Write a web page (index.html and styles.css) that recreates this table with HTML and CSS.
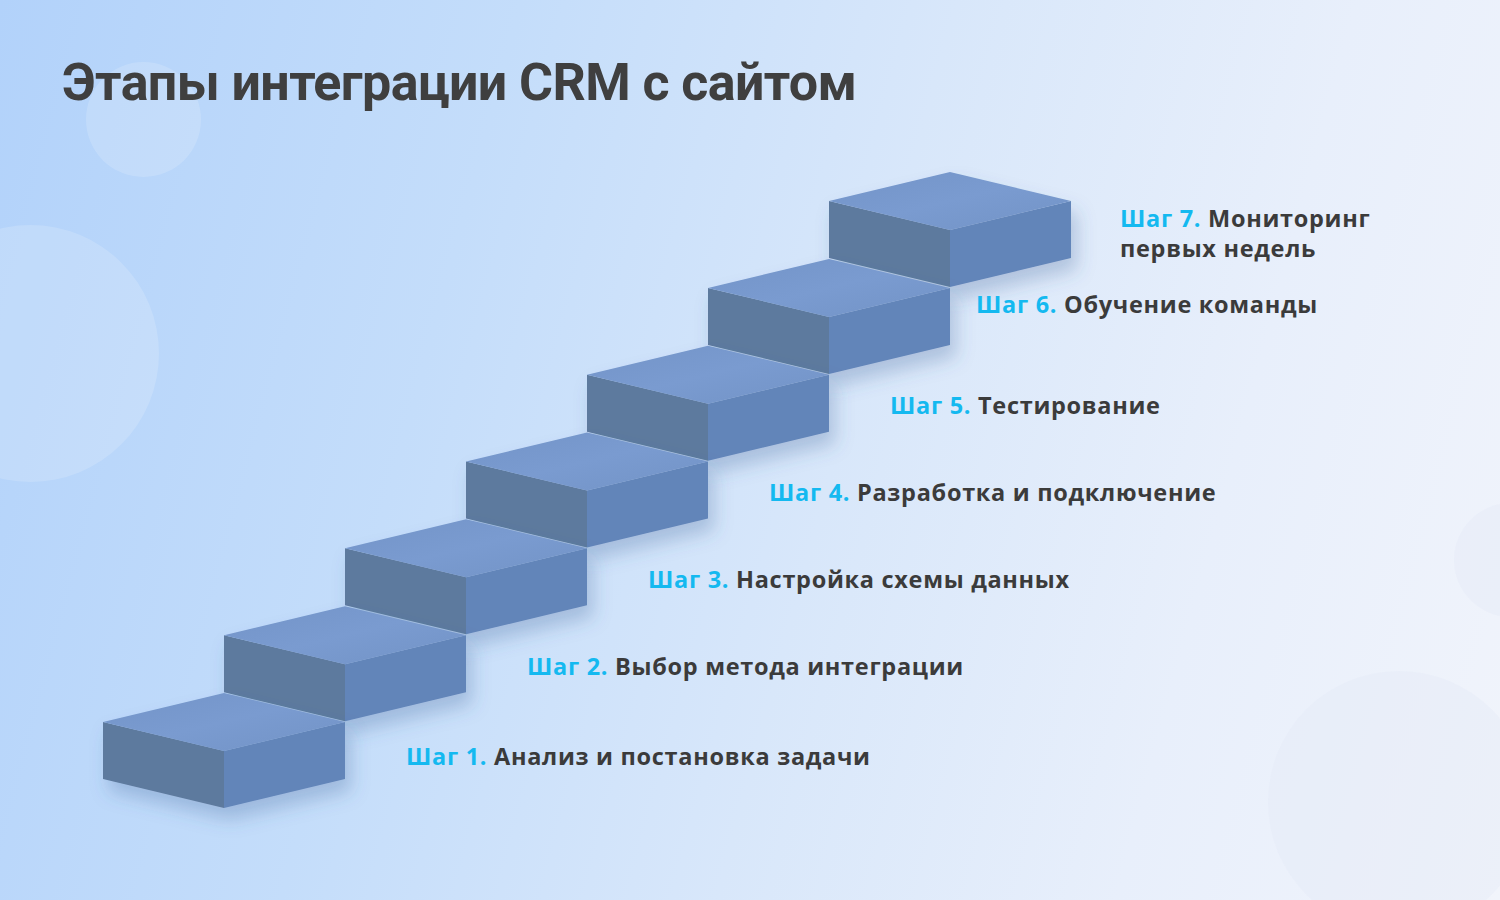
FILE: index.html
```html
<!DOCTYPE html>
<html lang="ru">
<head>
<meta charset="utf-8">
<title>Этапы интеграции CRM с сайтом</title>
<link rel="stylesheet" href="styles.css">
</head>
<body>
<div class="slide">
  <div class="bubble bubble-a"></div>
  <div class="bubble bubble-b"></div>
  <div class="bubble bubble-c"></div>
  <div class="bubble bubble-d"></div>

  <h1 class="title">Этапы интеграции CRM с сайтом</h1>

  <svg class="stairs" width="1500" height="900" viewBox="0 0 1500 900" xmlns="http://www.w3.org/2000/svg">
    <defs>
      <linearGradient id="topg" x1="0" y1="0" x2="1" y2="1">
        <stop offset="0" stop-color="#7394c8"/>
        <stop offset="0.5" stop-color="#7a9bd0"/>
        <stop offset="1" stop-color="#7293c6"/>
      </linearGradient>
      <filter id="sh" x="-20%" y="-20%" width="150%" height="160%">
        <feDropShadow dx="6" dy="12" stdDeviation="9" flood-color="#3a5f94" flood-opacity="0.28"/>
      </filter>
    </defs>
    <g id="blocks"></g>
  </svg>

  <div class="step s1"><span class="num">Шаг 1.</span> Анализ и постановка задачи</div>
  <div class="step s2"><span class="num">Шаг 2.</span> Выбор метода интеграции</div>
  <div class="step s3"><span class="num">Шаг 3.</span> Настройка схемы данных</div>
  <div class="step s4"><span class="num">Шаг 4.</span> Разработка и подключение</div>
  <div class="step s5"><span class="num">Шаг 5.</span> Тестирование</div>
  <div class="step s6"><span class="num">Шаг 6.</span> Обучение команды</div>
  <div class="step s7"><span class="num">Шаг 7.</span> Мониторинг<br>первых недель</div>
</div>
<script src="script.js"></script>
</body>
</html>
```

FILE: script.js
```js
(function () {
  var g = document.getElementById('blocks');
  var ns = 'http://www.w3.org/2000/svg';
  function poly(pts, fill) {
    var p = document.createElementNS(ns, 'polygon');
    p.setAttribute('points', pts.map(function (q) { return q[0].toFixed(1) + ',' + q[1].toFixed(1); }).join(' '));
    p.setAttribute('fill', fill);
    return p;
  }
  for (var i = 6; i >= 0; i--) {
    var x = 103 + 121 * i;
    var y = 722 - 86.83 * i;
    var grp = document.createElementNS(ns, 'g');
    grp.setAttribute('filter', 'url(#sh)');
    grp.appendChild(poly([[x, y], [x + 121, y + 29], [x + 121, y + 86], [x, y + 57]], '#5d7a9e'));
    grp.appendChild(poly([[x + 121, y + 29], [x + 242, y], [x + 242, y + 57], [x + 121, y + 86]], '#6285b9'));
    grp.appendChild(poly([[x, y], [x + 121, y - 29], [x + 242, y], [x + 121, y + 29]], 'url(#topg)'));
    g.appendChild(grp);
  }
})();
```

FILE: styles.css
```css
* { box-sizing: border-box; }
html, body { margin: 0; padding: 0; }
body {
  width: 1500px;
  height: 900px;
  overflow: hidden;
  font-family: "Open Sans", "Roboto", sans-serif;
}
.slide {
  position: relative;
  width: 1500px;
  height: 900px;
  overflow: hidden;
  background: linear-gradient(105deg, #b2d2fa 0%, #c4ddfa 30%, #d8e7fa 55%, #e8effb 78%, #f1f4fb 100%);
  padding: 57px 0 0 62px;
}
.bubble {
  position: absolute;
  border-radius: 50%;
  background: rgba(255, 255, 255, 0.16);
}
.bubble-a { left: 86px; top: 62px; width: 115px; height: 115px; }
.bubble-b { left: -98px; top: 225px; width: 257px; height: 257px; }
.bubble-c { left: 1268px; top: 671px; width: 262px; height: 262px; background: rgba(225, 232, 245, 0.35); }
.bubble-d { left: 1454px; top: 503px; width: 114px; height: 114px; background: rgba(225, 232, 245, 0.35); }

.title {
  position: relative;
  margin: 0;
  font-family: "Roboto", "Liberation Sans", sans-serif;
  font-weight: 700;
  font-size: 52px;
  line-height: 52px;
  letter-spacing: -0.6px;
  color: #3f3f3f;
}
.stairs {
  position: absolute;
  left: 0;
  top: 0;
}
.step {
  position: absolute;
  font-family: "Open Sans", "Roboto", sans-serif;
  font-weight: 700;
  font-size: 23.5px;
  line-height: 30px;
  letter-spacing: 0.7px;
  color: #3b3b3b;
  white-space: nowrap;
}
.num { color: #14b9f0; }
.s1 { left: 406px; top: 741px; }
.s2 { left: 527px; top: 651px; }
.s3 { left: 648px; top: 564px; }
.s4 { left: 769px; top: 477px; }
.s5 { left: 890px; top: 390px; }
.s6 { left: 976px; top: 289px; }
.s7 { left: 1120px; top: 203px; }
```
